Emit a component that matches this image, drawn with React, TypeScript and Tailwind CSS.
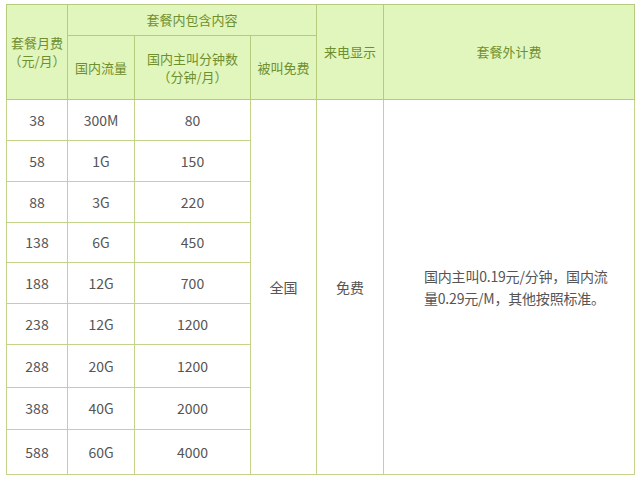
import React from 'react';

const rows = [
  { fee: '38', data: '300M', minutes: '80', h: 'h-[41px]' },
  { fee: '58', data: '1G', minutes: '150', h: 'h-[41px]' },
  { fee: '88', data: '3G', minutes: '220', h: 'h-[41px]' },
  { fee: '138', data: '6G', minutes: '450', h: 'h-[40px]' },
  { fee: '188', data: '12G', minutes: '700', h: 'h-[41px]' },
  { fee: '238', data: '12G', minutes: '1200', h: 'h-[41px]' },
  { fee: '288', data: '20G', minutes: '1200', h: 'h-[43px]' },
  { fee: '388', data: '40G', minutes: '2000', h: 'h-[42px]' },
  { fee: '588', data: '60G', minutes: '4000', h: 'h-[45px]' },
];

const th = 'border border-[#b7cb7e] bg-[#e1f6bd] text-[#6f8f2e] font-normal text-[13px] leading-[18px] text-center align-middle p-0';
const td = 'border border-[#c2d48a] text-[#555] text-[14px] text-center align-middle p-0';

const App = () => {
  return (
    <div className="w-[640px] h-[485px] bg-white pt-[4px] pl-[6px] font-['Microsoft_YaHei','Noto_Sans_CJK_SC',sans-serif]">
      <table className="border-collapse table-fixed w-[628px]">
        <colgroup>
          <col className="w-[61px]" />
          <col className="w-[67px]" />
          <col className="w-[116px]" />
          <col className="w-[66px]" />
          <col className="w-[67px]" />
          <col className="w-[251px]" />
        </colgroup>
        <thead>
          <tr className="h-[31px]">
            <th rowSpan={2} className={th}>
              套餐月费<br />（元/月）
            </th>
            <th colSpan={3} className={th}>套餐内包含内容</th>
            <th rowSpan={2} className={th}>来电显示</th>
            <th rowSpan={2} className={th}>套餐外计费</th>
          </tr>
          <tr className="h-[64px]">
            <th className={th}>国内流量</th>
            <th className={th}>
              国内主叫分钟数<br />（分钟/月）
            </th>
            <th className={th}>被叫免费</th>
          </tr>
        </thead>
        <tbody>
          {rows.map((r, i) => (
            <tr key={i} className={r.h}>
              <td className={td}>{r.fee}</td>
              <td className={td}>{r.data}</td>
              <td className={td}>{r.minutes}</td>
              {i === 0 && (
                <>
                  <td rowSpan={9} className={`${td} text-[13px]`}>全国</td>
                  <td rowSpan={9} className={`${td} text-[13px]`}>免费</td>
                  <td rowSpan={9} className={`${td} text-[12px] leading-[22px] text-left pl-[40px] whitespace-nowrap tracking-[-0.2px]`}>
                    国内主叫0.19元/分钟，国内流<br />量0.29元/M，其他按照标准。
                  </td>
                </>
              )}
            </tr>
          ))}
        </tbody>
      </table>
    </div>
  );
};

export default App;
